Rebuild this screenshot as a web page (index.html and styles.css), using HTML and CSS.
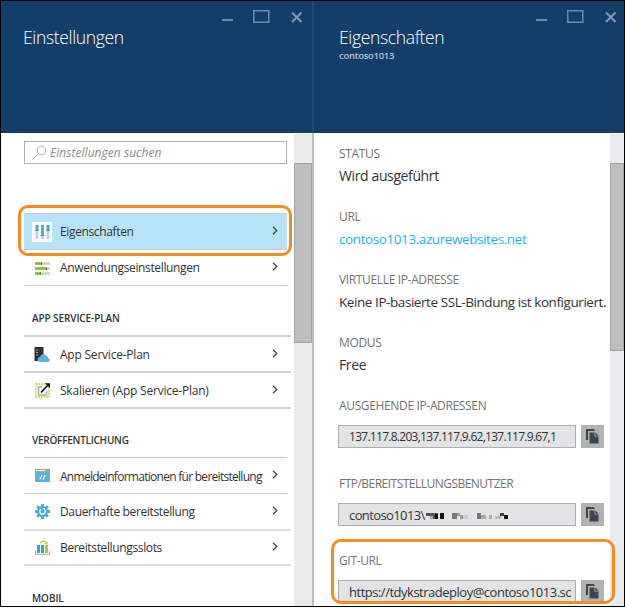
FILE: index.html
```html
<!DOCTYPE html>
<html lang="de">
<head>
<meta charset="utf-8">
<title>Einstellungen</title>
<link rel="stylesheet" href="styles.css">
</head>
<body>
<svg class="defs" width="0" height="0" aria-hidden="true">
  <symbol id="chevron" viewBox="0 0 6 9"><path d="M1 .7 4.8 4.5 1 8.3" fill="none" stroke="#444" stroke-width="1.3"/></symbol>
  <symbol id="copy" viewBox="0 0 13 15"><path d="M0 0h7.500l1.500 1.500V2H2v9H0z" fill="#3c4652"/><path d="M3.500 3.500h5v4h4v7h-9z" fill="#3c4652"/><path d="M9.300 3.300 12.500 6.700H9.300z" fill="#3c4652"/></symbol>
  <symbol id="winctl" viewBox="0 0 80 14"><path d="M0 11h11" stroke="#7089a7" stroke-width="2"/><rect x="31.750" y="1.750" width="15" height="11.500" fill="none" stroke="#7089a7" stroke-width="1.500"/><path d="m70 3.500 9.500 9.500m0-9.500L70 13" stroke="#8397b0" stroke-width="2"/></symbol>
</svg>
<main class="frame">
  <section class="blade settings">
    <header class="head">
      <svg class="winctl"><use href="#winctl"/></svg>
      <h1>Einstellungen</h1>
    </header>
    <div class="body">
      <div class="content">
        <div class="search">
          <svg width="15" height="15" viewBox="0 0 15 15" fill="none" stroke="#aaa"><circle cx="9.500" cy="5.500" r="4.300"/><path d="M6.500 8.700.7 14.300"/></svg>
          <span>Einstellungen suchen</span>
        </div>
        <nav class="group first">
          <a class="row selected">
            <span class="icon boxed"><svg width="15" height="16" viewBox="0 0 15 16"><path d="M2 1v14M7.500 1v14M13 1v14" stroke="#b9d3e0" stroke-width="2.800"/><path d="M2 1v5M7.500 1v10M13 1v5" stroke="#49a9d9" stroke-width="2.800"/><path d="M0 6.500h4M5.500 11.500h4M11 6.500h4" stroke="#7c919e"/></svg></span>
            <span class="label">Eigenschaften</span><svg class="chev"><use href="#chevron"/></svg>
          </a>
          <a class="row">
            <span class="icon"><svg width="15" height="14" viewBox="0 0 15 14"><path d="M0 2.500h15M0 7.500h15M0 12.500h15" stroke="#c3dc98" stroke-width="2.400"/><path d="M0 2.500h6M0 7.500h11M0 12.500h5" stroke="#7fba3c" stroke-width="2.400"/><path d="M6.500 1v3M11.500 6v3M5.500 11v3" stroke="#6d7d58"/></svg></span>
            <span class="label">Anwendungseinstellungen</span><svg class="chev"><use href="#chevron"/></svg>
          </a>
        </nav>
        <h2 class="plan-title">APP SERVICE-PLAN</h2>
        <nav class="group thick">
          <a class="row">
            <span class="icon"><svg width="16" height="15" viewBox="0 0 16 15"><path d="M.5 0h9v14h-9z" fill="#2e3032"/><path d="M2 3h2M2 5.500h2M2 8h2" stroke="#93ad3a"/><path d="M6 15a2.500 2.500 0 0 1 0-5 3.300 3.300 0 0 1 6-1.300 2.200 2.200 0 0 1 2 2.500 1.900 1.900 0 0 1 0 3.800z" fill="#59b4d9"/></svg></span>
            <span class="label plan">App Service-Plan</span><svg class="chev"><use href="#chevron"/></svg>
          </a>
          <a class="row">
            <span class="icon"><svg width="15" height="15" viewBox="0 0 15 15"><path d="M1 1h13v13H1z" fill="#fff" stroke="#c3dc4c" stroke-width="1.800" stroke-dasharray="1.600 1.100"/><path d="M7.500 4H3.500v8H11.500V8.500" fill="none" stroke="#aaa" stroke-width="1.500"/><path d="M6 9.500 12.500 2.500" stroke="#111" stroke-width="1.700"/><path d="M10 .3h5v5z" fill="#111"/></svg></span>
            <span class="label plan">Skalieren (App Service-Plan)</span><svg class="chev"><use href="#chevron"/></svg>
          </a>
        </nav>
        <h2 class="publish-title">VERÖFFENTLICHUNG</h2>
        <nav class="group publish">
          <a class="row">
            <span class="icon"><svg width="15" height="13" viewBox="0 0 15 13"><path d="M0 0h15v13H0z" fill="#59b4d9"/><path d="M0 0h15v3H0z" fill="#a0a1a2"/><path d="M1 1.500h9" stroke="#fff"/><path d="m5 10.500 2-4.500m1 4.500L10 6" stroke="#fff" stroke-width="1.200"/></svg></span>
            <span class="label creds">Anmeldeinformationen für bereitstellung</span><svg class="chev"><use href="#chevron"/></svg>
          </a>
          <a class="row">
            <span class="icon"><svg width="15" height="15" viewBox="-7.500 -7.500 15 15"><path d="M0-7.500V7.500M-7.500 0H7.500M-5.300-5.300 5.300 5.300M5.300-5.300-5.300 5.300" stroke="#4aaad7" stroke-width="2.800"/><circle r="5.500" fill="#4aaad7"/><path d="M-1.300-2.400A2.700 2.700 0 1 0 2-1.800" fill="none" stroke="#fff" stroke-width="1.300"/><path d="M0-3.500h2.700V-.8z" fill="#fff"/></svg></span>
            <span class="label">Dauerhafte bereitstellung</span><svg class="chev"><use href="#chevron"/></svg>
          </a>
          <a class="row">
            <span class="icon"><svg width="15" height="15" viewBox="0 0 15 15"><path d="M.5 11v3.300h14V11" fill="none" stroke="#aaa"/><path d="M2 5h3v8H2zM6 5h3v8H6z" fill="#3f9fd0"/><path d="M10 5h3v8h-3z" fill="#a9cf2b"/><path d="M5 3.500C6.500.2 10.500.2 11.500 3.500" fill="none" stroke="#b8d432" stroke-width="1.300"/><path d="M9.500 2.800h4l-2 2.500z" fill="#b8d432"/></svg></span>
            <span class="label">Bereitstellungsslots</span><svg class="chev"><use href="#chevron"/></svg>
          </a>
        </nav>
        <h2 class="mobile-title">MOBIL</h2>
      </div>
      <div class="scroll"><div class="thumb"></div></div>
    </div>
  </section>
  <section class="blade properties">
    <header class="head">
      <svg class="winctl"><use href="#winctl"/></svg>
      <h1>Eigenschaften</h1>
      <p>contoso1013</p>
    </header>
    <div class="body">
      <dl class="content">
        <div class="field"><dt>STATUS</dt><dd>Wird ausgeführt</dd></div>
        <div class="field"><dt>URL</dt><dd class="link">contoso1013.azurewebsites.net</dd></div>
        <div class="field"><dt>VIRTUELLE IP-ADRESSE</dt><dd class="ssl">Keine IP-basierte SSL-Bindung ist konfiguriert.</dd></div>
        <div class="field"><dt>MODUS</dt><dd>Free</dd></div>
        <div class="field boxed-field"><dt>AUSGEHENDE IP-ADRESSEN</dt><dd class="copyline"><span class="box ips">137.117.8.203,137.117.9.62,137.117.9.67,1</span><button><svg width="13" height="15"><use href="#copy"/></svg></button></dd></div>
        <div class="field boxed-field"><dt class="ftp">FTP/BEREITSTELLUNGSBENUTZER</dt><dd class="copyline"><span class="box user">contoso1013\<svg width="84" height="8" viewBox="0 0 84 8"><path d="M1 1h7v3H1zM7 1h6v6H7z" fill="#555"/><path d="M10 2h3v5h-3zM15 1h4v6h-4z" fill="#111"/><path d="M5 4h3v3H5z" fill="#aaa"/><path d="M27 1h5v6h-5z" fill="#777"/><path d="M32 1h3v3h-3zM35 3h3v4h-3z" fill="#999"/><path d="M38 3h5v4h-5z" fill="#ccc"/><path d="M52 1h4v6h-4z" fill="#777"/><path d="M56 3h5v4h-5zM64 3h3v4h-3z" fill="#aaa"/><path d="M70 4h6v3h-6z" fill="#bbb"/><path d="M75 1h4v3h-4z" fill="#444"/><path d="M79 3h4v4h-4z" fill="#111"/></svg></span><button><svg width="13" height="15"><use href="#copy"/></svg></button></dd></div>
        <div class="field boxed-field"><dt>GIT-URL</dt><dd class="copyline"><span class="box">https://tdykstradeploy@contoso1013.sc</span><button><svg width="13" height="15"><use href="#copy"/></svg></button></dd></div>
      </dl>
      <div class="scroll"><div class="thumb"></div></div>
    </div>
  </section>
  <div class="mark mark-item"></div>
  <div class="mark mark-git"></div>
</main>
</body>
</html>
```
FILE: styles.css
```css
* { box-sizing: border-box; }
body { margin: 0; background: #fff; font-family: "Open Sans", "Noto Sans", sans-serif; color: #333; }
.defs { position: absolute; }
h1, h2, p, dl, dd { margin: 0; }
.frame { position: relative; width: 625px; height: 607px; display: grid; grid-template-columns: 311px 312px; border: 1px solid #000; overflow: hidden; }
.blade { display: flex; flex-direction: column; height: 605px; overflow: hidden; }
.head { height: 132px; flex: none; background: #133e6a; color: #fff; padding: 8px 10px 0 22px; display: flex; flex-direction: column; }
.properties .head { border-left: 2px solid #234b75; padding: 8px 8px 0 25px; }
.winctl { width: 80px; height: 14px; align-self: flex-end; overflow: visible; }
.head h1 { font-size: 17.5px; font-weight: 300; line-height: 24px; margin-top: 2px; white-space: nowrap; letter-spacing: -.34px; }
.head p { font-size: 9.5px; font-weight: 600; line-height: 12px; margin-top: 1px; color: #b8c2d3; letter-spacing: -.28px; }
.body { flex: 1; min-height: 0; display: flex; }
.properties .body { border-left: 2px solid #bbbcbe; }
.content { flex: 1; min-width: 0; overflow: hidden; }
.scroll { width: 18px; background: #e9eaec; padding-top: 29px; border-top: 1px solid #fff; }
.thumb { height: 180px; background: #bebebe; border: 1px solid #a2a2a2; }
.properties .scroll { width: 14px; }
.properties .thumb { height: 188px; }

.settings .content { padding: 8px 0 0 23px; }
.search { width: 263px; height: 23px; border: 1px solid #b0b1b3; display: flex; align-items: center; padding: 0 0 0 7px; gap: 3px; font-size: 12px; font-style: italic; color: #8b8b8b; letter-spacing: .04px; }
.group { width: 263px; border-top: 1px solid #c8c9cb; }
.first { margin-top: 49px; }
.row { height: 36px; display: flex; align-items: center; border-bottom: 1px solid #c8c9cb; padding: 0 9px 0 8px; }
.selected { background: #b7e3f8; }
.icon { width: 20px; height: 20px; flex: none; display: flex; align-items: center; justify-content: center; margin-right: 8px; }
.boxed { background: #fff; }
.label { flex: 1; min-width: 0; font-size: 12px; white-space: nowrap; letter-spacing: -.36px; }
.plan { letter-spacing: -.22px; }
.creds { letter-spacing: -.72px; padding-top: 2px; }
.chev { width: 6px; height: 9px; flex: none; margin-bottom: 2px; }
h2 { font-size: 10px; font-weight: 600; line-height: 14px; padding-left: 8px; letter-spacing: -.1px; }
.plan-title { height: 49px; padding-top: 25px; }
.publish-title { height: 48px; padding-top: 24px; letter-spacing: -.25px; }
.mobile-title { padding-top: 25px; }
.thick { width: 267px; border-top: 2px solid #d0d1d3; }
.thick .row { border-bottom: 2px solid #d0d1d3; padding-right: 13px; }
.publish .row:nth-child(2) { height: 37px; width: 267px; border-bottom: 2px solid #dcdddf; padding-right: 13px; }
.publish .row:nth-child(3) { height: 35px; width: 267px; border-bottom: 2px solid #dcdddf; padding-right: 13px; }

.properties .content { padding: 11px 0 0 24px; }
.field { height: 63px; white-space: nowrap; padding-left: 1px; }
dt { font-size: 12px; line-height: 20px; color: #737373; letter-spacing: -.35px; }
dd { font-size: 14px; line-height: 24px; letter-spacing: -.38px; }
.link { font-size: 13.5px; line-height: 25px; color: #1cb4ec; letter-spacing: -.41px; }
.ssl { font-size: 13.5px; line-height: 25px; letter-spacing: -.43px; }
.ftp { letter-spacing: -.52px; }
.boxed-field { height: 78px; padding-left: 0; }
.boxed-field dt { padding-left: 1px; }
.boxed-field + .boxed-field + .boxed-field { margin-top: -1px; }
.copyline { display: flex; gap: 5px; margin-top: 9px; }
.box { width: 238px; height: 23px; line-height: 22px; border: 1px solid #adadaf; background: #e2e3e5; padding-left: 10px; font-size: 13px; letter-spacing: -.49px; overflow: hidden; }
.user { letter-spacing: -.6px; }
.ips { font-size: 12px; letter-spacing: -.72px; }
button { width: 23px; height: 23px; border: 0; padding: 0; background: #b1b3b3; display: flex; align-items: center; justify-content: center; }
.mark { position: absolute; border: 3px solid #f68b1f; border-radius: 10px; }
.mark-item { left: 17px; top: 204px; width: 274px; height: 51px; }
.mark-git { left: 330px; top: 538px; width: 284px; height: 65px; box-shadow: 0 2px #fff; }
```
